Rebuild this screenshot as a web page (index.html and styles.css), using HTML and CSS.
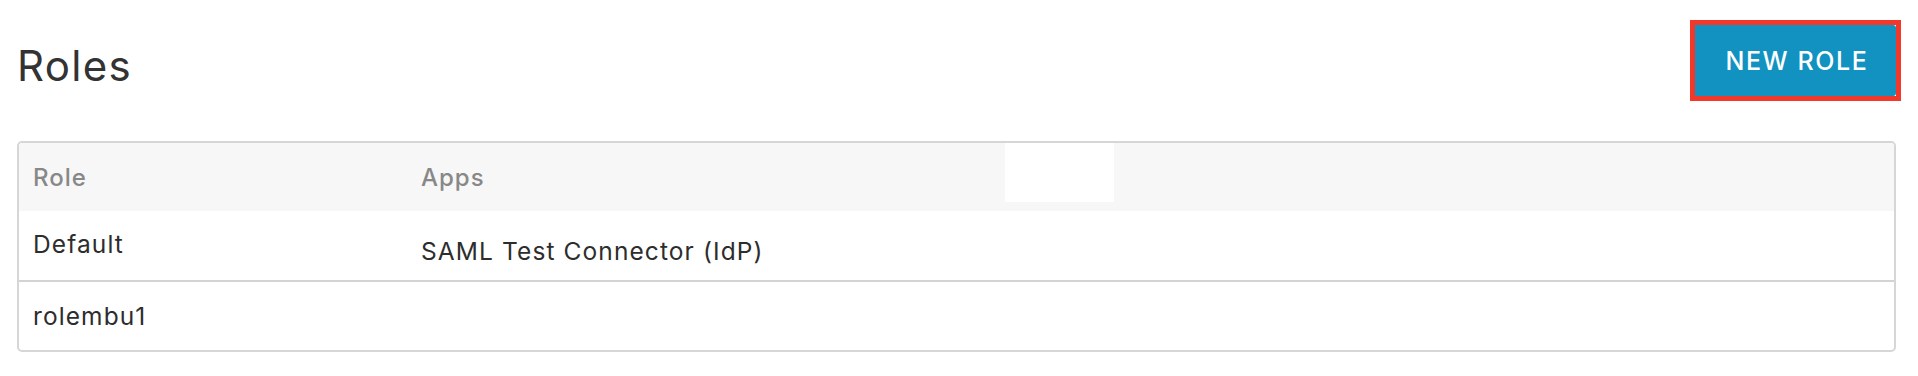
FILE: index.html
```html
<!DOCTYPE html>
<html>
<head>
<meta charset="utf-8">
<link rel="stylesheet" href="styles.css">
</head>
<body>
<div class="page">
  <div class="page-head">
    <h1 class="title">Roles</h1>
    <span class="highlight"><button class="btn-primary">NEW ROLE</button></span>
  </div>
  <div class="table-wrap">
    <div class="redact"></div>
    <table class="roles">
      <thead>
        <tr><th class="col-role">Role</th><th>Apps</th></tr>
      </thead>
      <tbody>
        <tr class="row-1"><td class="cell-role">Default</td><td class="cell-apps">SAML Test Connector (IdP)</td></tr>
        <tr class="row-2"><td class="cell-role">rolembu1</td><td class="cell-apps"></td></tr>
      </tbody>
    </table>
  </div>
</div>
</body>
</html>
```

FILE: styles.css
```css
* { box-sizing: border-box; }
html, body { margin: 0; padding: 0; background: #fff; }
body {
  font-family: Inter, "Noto Sans", "DejaVu Sans", sans-serif;
  color: #2d2d2d;
}
.page {
  padding: 20px 22px 0 17px;
}
.page-head {
  display: flex;
  justify-content: space-between;
  align-items: flex-start;
  height: 81px;
  margin-bottom: 40px;
}
.title {
  margin: 0;
  padding: 21px 0 0 0;
  font-weight: 400;
  font-size: 42px;
  line-height: 50px;
  color: #333;
  letter-spacing: 1.3px;
}
.highlight {
  display: block;
  border: 5px solid #f2372b;
  margin-right: -5px;
}
.btn-primary {
  display: block;
  width: 201px;
  height: 71px;
  border: 0;
  border-radius: 0 3px 3px 0;
  background: #1192c1;
  color: #fff;
  font-family: inherit;
  font-size: 25px;
  font-weight: 500;
  letter-spacing: 1.6px;
  padding: 0 0 0 3px;
  cursor: pointer;
}
.table-wrap {
  position: relative;
  border: 2px solid #d6d6d6;
  border-radius: 5px;
  overflow: hidden;
}
.redact {
  position: absolute;
  left: 986px;
  top: -3px;
  width: 109px;
  height: 62px;
  background: #fff;
}
.roles {
  width: 100%;
  border-collapse: collapse;
  font-size: 24px;
}
.roles th {
  height: 68px;
  background: #f7f7f7;
  color: #888;
  font-weight: 500;
  text-align: left;
  padding: 0 0 0 14px;
  vertical-align: middle;
  letter-spacing: 1px;
}
.roles th.col-role { width: 388px; }
.roles td {
  padding: 0 0 0 14px;
  vertical-align: middle;
  letter-spacing: 1.1px;
  font-size: 24.5px;
}
.row-1 td {
  height: 70px;
  border-bottom: 2px solid #d3d3d3;
}
.row-1 td.cell-role { padding-bottom: 3px; }
.row-1 .cell-apps { padding-top: 10px; }
.row-2 td { height: 69px; }
```
